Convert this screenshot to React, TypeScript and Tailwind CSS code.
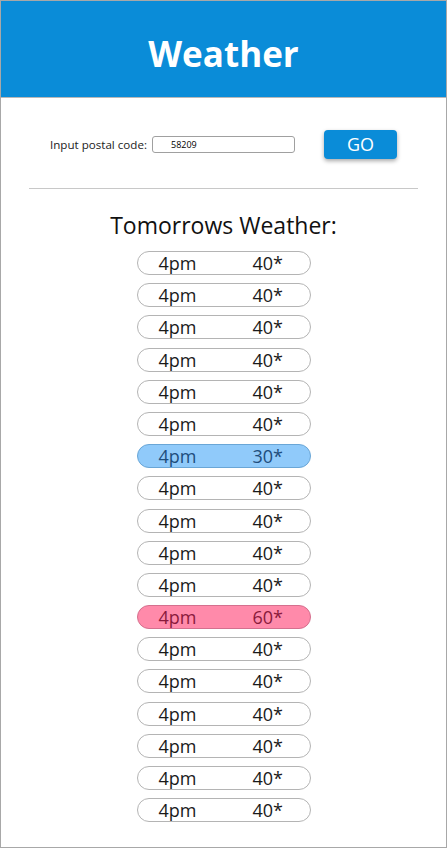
const hours = [
  { time: "4pm", temp: 40 },
  { time: "4pm", temp: 40 },
  { time: "4pm", temp: 40 },
  { time: "4pm", temp: 40 },
  { time: "4pm", temp: 40 },
  { time: "4pm", temp: 40 },
  { time: "4pm", temp: 30 },
  { time: "4pm", temp: 40 },
  { time: "4pm", temp: 40 },
  { time: "4pm", temp: 40 },
  { time: "4pm", temp: 40 },
  { time: "4pm", temp: 60 },
  { time: "4pm", temp: 40 },
  { time: "4pm", temp: 40 },
  { time: "4pm", temp: 40 },
  { time: "4pm", temp: 40 },
  { time: "4pm", temp: 40 },
  { time: "4pm", temp: 40 },
];

const HourRow = ({ time, temp }: { time: string; temp: number }) => {
  let tone = "border-[#b4b4b4] bg-white text-[#1a1a1a]";
  if (temp <= 30) tone = "border-[#6aa6d6] bg-[#90cafa] text-[#1e4d7c]";
  if (temp >= 60) tone = "border-[#d4708e] bg-[#ff8aaa] text-[#8a1a3c]";

  return (
    <div
      className={`flex h-[24px] w-[174px] items-center rounded-full border pl-[21px] text-[18px] leading-none ${tone}`}
    >
      <span className="w-[94px]">{time}</span>
      <span>{temp}*</span>
    </div>
  );
};

export default function App() {
  return (
    <div className="flex h-[848px] w-[447px] flex-col border border-[#a8a8a8] bg-white font-['Open_Sans',sans-serif]">
      <header className="flex h-[97px] items-center justify-center border-b border-[#b8b8b8] bg-[#0a8cd8] pt-[8px]">
        <h1 className="text-[35px] font-bold leading-none text-white">Weather</h1>
      </header>

      <div className="mt-[32px] flex items-center pl-[49px]">
        <label className="text-[11.6px] text-[#222]">Input postal code:</label>
        <input
          className="ml-[5px] h-[17px] w-[143px] rounded-[3px] border border-[#a0a0a0] pl-[18px] text-[9px] text-black outline-none"
          defaultValue="58209"
          readOnly
        />
        <button
          className="ml-[29px] h-[29px] w-[73px] rounded-[4px] bg-[#0a8cd8] text-[18px] text-white shadow-[0_2px_4px_rgba(0,0,0,0.35)]"
          type="button"
        >
          GO
        </button>
      </div>

      <hr className="mx-[28px] mt-[29px] border-t border-[#c8c8c8]" />

      <h2 className="mt-[21px] text-center text-[23px] leading-[30px] text-[#111]">
        Tomorrows Weather:
      </h2>

      <div className="mt-[11px] flex flex-col items-center gap-[8.2px]">
        {hours.map((hour, index) => (
          <HourRow key={index} time={hour.time} temp={hour.temp} />
        ))}
      </div>
    </div>
  );
}
